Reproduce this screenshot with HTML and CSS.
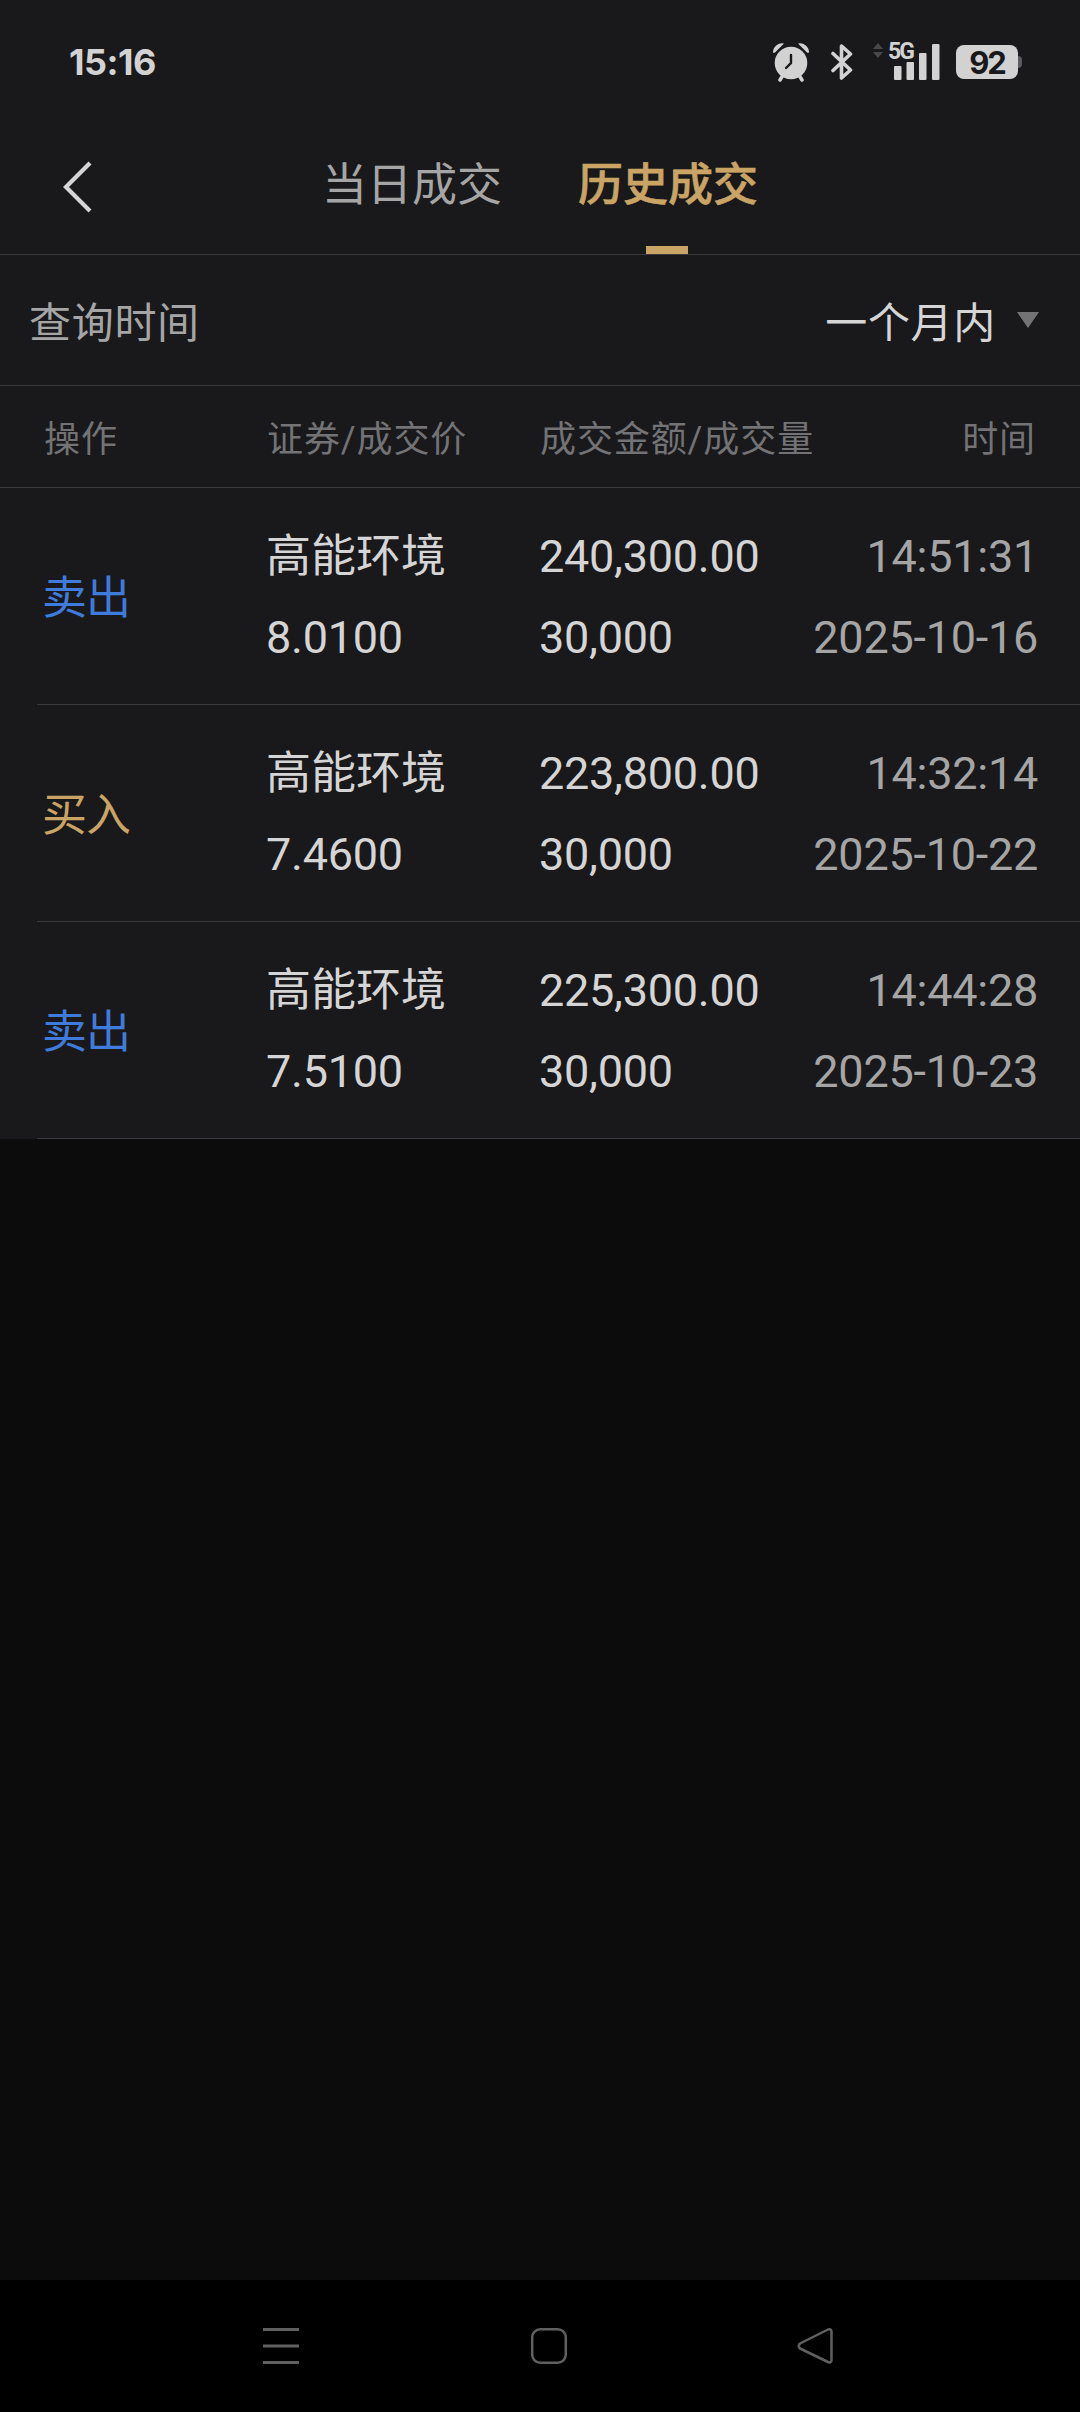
FILE: index.html
```html
<!DOCTYPE html>
<html lang="zh-CN">
<head>
  <meta charset="UTF-8">
  <title>历史成交</title>
  <link rel="stylesheet" href="styles.css">
</head>
<body>
<div class="status">
  <span class="clock">15:16</span>
  <div class="status-icons">
    <svg class="alarm" width="38" height="40" viewBox="0 0 38 40">
      <path d="M1 10A9 9 0 0 1 12 1.5L3 10.5Q1.500 11.500 1 10ZM37 10A9 9 0 0 0 26 1.500L35 10.500Q36.500 11.500 37 10Z" fill="#d2d2d2"/>
      <path d="M11 33L8 38M27 33L30 38" stroke="#d2d2d2" stroke-width="3.500" stroke-linecap="round"/>
      <circle cx="19" cy="21" r="16.300" fill="#d2d2d2"/>
      <path d="M19 13V21L14 26" fill="none" stroke="#19191b" stroke-width="2.400" stroke-linecap="round"/>
    </svg>
    <svg class="bt" width="22" height="38" viewBox="0 0 22 38">
      <path d="M2 10.500L19.500 27L10.500 35V3L19.500 11L2 27.500" fill="none" stroke="#d2d2d2" stroke-width="3.600" stroke-linejoin="round" stroke-linecap="round"/>
    </svg>
    <div class="signal">
      <svg width="68" height="38" viewBox="0 0 68 38">
        <path d="M0 6L5 0L10 6ZM0 9L5 15L10 9Z" fill="#48484a"/>
        <g fill="#d2d2d2">
          <rect x="21" y="23" width="7.500" height="14" rx="1"/>
          <rect x="33.500" y="19" width="7.500" height="18" rx="1"/>
          <rect x="46" y="10" width="7.500" height="27" rx="1"/>
          <rect x="59" y="1" width="7.500" height="36" rx="1"/>
        </g>
      </svg>
      <span class="net">5G</span>
    </div>
    <div class="battery">92</div>
  </div>
</div>

<div class="header">
  <svg class="back" width="30" height="52" viewBox="0 0 30 52"><path d="M28 2L4 26L28 50" fill="none" stroke="#d6d6d6" stroke-width="4.200"/></svg>
  <div class="tabs">
    <div class="tab">当日成交</div>
    <div class="tab active">历史成交</div>
  </div>
</div>

<div class="query">
  <span class="query-label">查询时间</span>
  <span class="query-value">一个月内</span>
  <svg width="22" height="16" viewBox="0 0 22 16"><path d="M0 0H22L11 16Z" fill="#737375"/></svg>
</div>

<div class="cols head">
  <div>操作</div>
  <div>证券/成交价</div>
  <div>成交金额/成交量</div>
  <div class="right">时间</div>
</div>

<div class="list">
  <div class="cols row">
    <div class="side sell">卖出</div>
    <div><span class="name">高能环境</span><br>8.0100</div>
    <div>240,300.00<br>30,000</div>
    <div class="right time">14:51:31<br>2025-10-16</div>
  </div>
  <div class="cols row">
    <div class="side buy">买入</div>
    <div><span class="name">高能环境</span><br>7.4600</div>
    <div>223,800.00<br>30,000</div>
    <div class="right time">14:32:14<br>2025-10-22</div>
  </div>
  <div class="cols row">
    <div class="side sell">卖出</div>
    <div><span class="name">高能环境</span><br>7.5100</div>
    <div>225,300.00<br>30,000</div>
    <div class="right time">14:44:28<br>2025-10-23</div>
  </div>
</div>

<div class="navbar">
  <svg width="38" height="38" viewBox="0 0 38 38"><path d="M1 2.500H37M1 19H37M1 35.500H37" stroke="#606060" stroke-width="3"/></svg>
  <svg width="38" height="38" viewBox="0 0 38 38"><rect x="2.200" y="2.200" width="33.600" height="33.600" rx="8" fill="none" stroke="#606060" stroke-width="2.500"/></svg>
  <svg width="38" height="38" viewBox="0 0 38 38"><path d="M3 16.500L31 2.500Q34.500 1.500 34.500 5V33Q34.500 36.500 31 35L3 21.500Q0.500 19 3 16.500Z" fill="none" stroke="#606060" stroke-width="2.500" stroke-linejoin="round"/></svg>
</div>
</body>
</html>
```

FILE: styles.css
```css
* { box-sizing: border-box; }
body { margin: 0; width: 1080px; height: 2412px; display: flex; flex-direction: column; overflow: hidden; background: #0c0c0c; color: #d5d5d5; font-family: Roboto, "Noto Sans CJK SC", sans-serif; }
svg { display: block; flex: none; }

.status { height: 120px; padding: 0 62px 0 69px; display: flex; align-items: center; justify-content: space-between; background: #19191b; color: #d2d2d2; }
.clock { font: 700 36px/40px Inter, sans-serif; letter-spacing: -.5px; margin-top: 3px; }
.status-icons { display: flex; align-items: center; padding-top: 4px; }
.bt { margin-left: 21px; }
.signal { position: relative; margin-left: 20px; }
.net { position: absolute; left: 15px; top: -1px; font: bold 23px/20px Roboto, sans-serif; letter-spacing: -2px; }
.battery { position: relative; margin-left: 15px; width: 62px; height: 34px; border-radius: 8px; background: #d2d2d2; color: #19191b; font: 700 31px/36px Inter, sans-serif; letter-spacing: -2px; text-align: center; }
.battery::after { content: ""; position: absolute; left: 62px; top: 11px; width: 4px; height: 12px; border-radius: 0 4px 4px 0; background: #5c5c5e; }

.header { height: 135px; padding-left: 62px; display: flex; align-items: center; background: #19191b; border-bottom: 1px solid #3a3a3c; }
.tabs { display: flex; gap: 76px; margin-left: 230px; height: 134px; }
.tab { position: relative; font-size: 45px; line-height: 131px; color: #a5a5a5; }
.tab.active { color: #c9a465; font-weight: 500; -webkit-text-stroke: .6px #c9a465; }
.tab.active::after { content: ""; position: absolute; left: 68px; bottom: 0; width: 42px; height: 8px; background: #c9a465; }

.query { height: 131px; padding: 0 41px 0 29px; display: flex; align-items: center; background: #19191b; border-bottom: 1px solid #3a3a3c; font-size: 42px; letter-spacing: .7px; }
.query span { padding-bottom: 2px; }
.query-label { flex: 1; color: #a5a5a5; }
.query-value { margin-right: 21px; }

.cols { display: grid; grid-template-columns: 223px 273px 240px 1fr; align-items: center; padding: 0 42px 0 43px; white-space: nowrap; }
.right { text-align: right; justify-self: end; }
.head { height: 102px; padding: 0 44px 2px 44px; background: #19191b; border-bottom: 1px solid #3a3a3c; color: #737375; font-size: 36px; letter-spacing: .9px; }
.list { background: #19191b; }
.row { height: 217px; font-size: 45px; line-height: 81px; letter-spacing: -.25px; background: linear-gradient(#3a3a3c, #3a3a3c) 37px 100% / 100% 1px no-repeat; }
.name { letter-spacing: 0; }
.side { padding-top: 4px; margin-left: -1px; letter-spacing: -1px; }
.time { color: #a5a5a5; }
.sell { color: #3f7bdc; }
.buy { color: #c9a465; }

.navbar { margin-top: auto; height: 132px; padding: 0 245px 0 262px; display: flex; align-items: center; justify-content: space-between; background: #000; }
```
